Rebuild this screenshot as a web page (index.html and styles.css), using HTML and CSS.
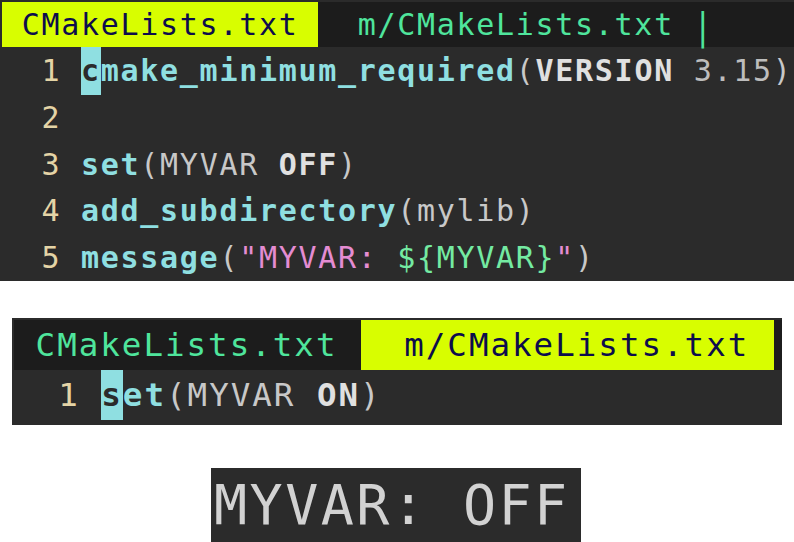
FILE: index.html
```html
<!DOCTYPE html>
<html>
<head>
<meta charset="utf-8">
<link rel="stylesheet" href="styles.css">
</head>
<body>
<div class="page">
  <section class="editor ed1">
    <div class="tabbar"><span class="tab active"> CMakeLists.txt </span><span class="tab inactive">  m/CMakeLists.txt <span class="bar">|</span></span></div>
    <div class="code">
      <div class="line"><span class="ln">  1 </span><span class="cursor">c</span><span class="kw">make_minimum_required</span><span class="p">(</span><span class="b">VERSION</span><span class="n"> 3.15</span><span class="p">)</span></div>
      <div class="line"><span class="ln">  2 </span></div>
      <div class="line"><span class="ln">  3 </span><span class="kw">set</span><span class="p">(MYVAR </span><span class="b">OFF</span><span class="p">)</span></div>
      <div class="line"><span class="ln">  4 </span><span class="kw">add_subdirectory</span><span class="p">(mylib)</span></div>
      <div class="line"><span class="ln">  5 </span><span class="kw">message</span><span class="p">(</span><span class="str">"MYVAR: </span><span class="var">${MYVAR}</span><span class="str">"</span><span class="p">)</span></div>
    </div>
  </section>

  <section class="editor ed2">
    <div class="tabbar"><span class="tab inactive"> CMakeLists.txt </span><span class="tab active">  m/CMakeLists.txt </span></div>
    <div class="code">
      <div class="line"><span class="ln">  1 </span><span class="cursor">s</span><span class="kw">et</span><span class="p">(MYVAR </span><span class="b">ON</span><span class="p">)</span></div>
    </div>
  </section>

  <div class="output">MYVAR: OFF</div>
</div>
</body>
</html>
```

FILE: styles.css
```css
html, body {
  margin: 0;
  padding: 0;
  background: #ffffff;
}

.page {
  width: 794px;
  height: 542px;
  overflow: hidden;
  display: flex;
  flex-direction: column;
  align-items: flex-start;
}

.editor {
  background: #2b2b2b;
  font-family: "DejaVu Sans Mono", monospace;
  padding-top: 2px;
}

.tabbar {
  background: #1c1c1c;
  display: flex;
  margin-left: 2px;
  white-space: pre;
}

.tab {
  display: block;
}

.tab.active {
  background: #d8fe00;
  color: #0d0d4c;
}

.tab.inactive {
  color: #4fe59c;
}

.bar {
  display: inline-block;
  transform: scaleY(1.25) translateY(1px);
}

.code {
  padding-left: 2px;
}

.line {
  color: #c8c8c8;
  white-space: pre;
}

.ln {
  color: #e4d4a6;
}

.kw {
  color: #8fdfe1;
  font-weight: bold;
}

.cursor {
  display: inline-block;
  background: #8fdfe1;
  color: #2b2b2b;
  font-weight: bold;
}

.p {
  color: #c8c8c8;
}

.n {
  color: #bdbdbd;
}

.b {
  color: #e0e0e0;
  font-weight: bold;
}

.str {
  color: #e48cd2;
}

.var {
  color: #74eaa2;
}

/* editor 1 */
.ed1 {
  width: 794px;
  height: 281px;
  box-sizing: border-box;
  font-size: 30px;
  letter-spacing: 1.7px;
}

.ed1 .tabbar {
  height: 45px;
  line-height: 45px;
}

.ed1 .line {
  height: 46.8px;
  line-height: 48px;
}

/* editor 2 */
.ed2 {
  margin-top: 37px;
  margin-left: 12px;
  width: 770px;
  height: 107px;
  box-sizing: border-box;
  font-size: 32.5px;
  letter-spacing: 2px;
}

.ed2 .tabbar {
  height: 50px;
  line-height: 50px;
}

.ed2 .tab.inactive {
  margin-right: 2px;
}

.ed2 .tab.active {
  padding-right: 3px;
}

.ed2 .code {
  padding-left: 3px;
}

.ed2 .line {
  height: 50px;
  line-height: 50px;
}

/* output */
.output {
  margin-top: 43px;
  margin-left: 211px;
  width: 370px;
  height: 74px;
  box-sizing: border-box;
  padding-left: 3px;
  background: #2b2b2b;
  color: #d2d2d2;
  font-family: "DejaVu Sans Mono", monospace;
  font-size: 55px;
  letter-spacing: 2.45px;
  line-height: 74px;
  white-space: pre;
}
```
